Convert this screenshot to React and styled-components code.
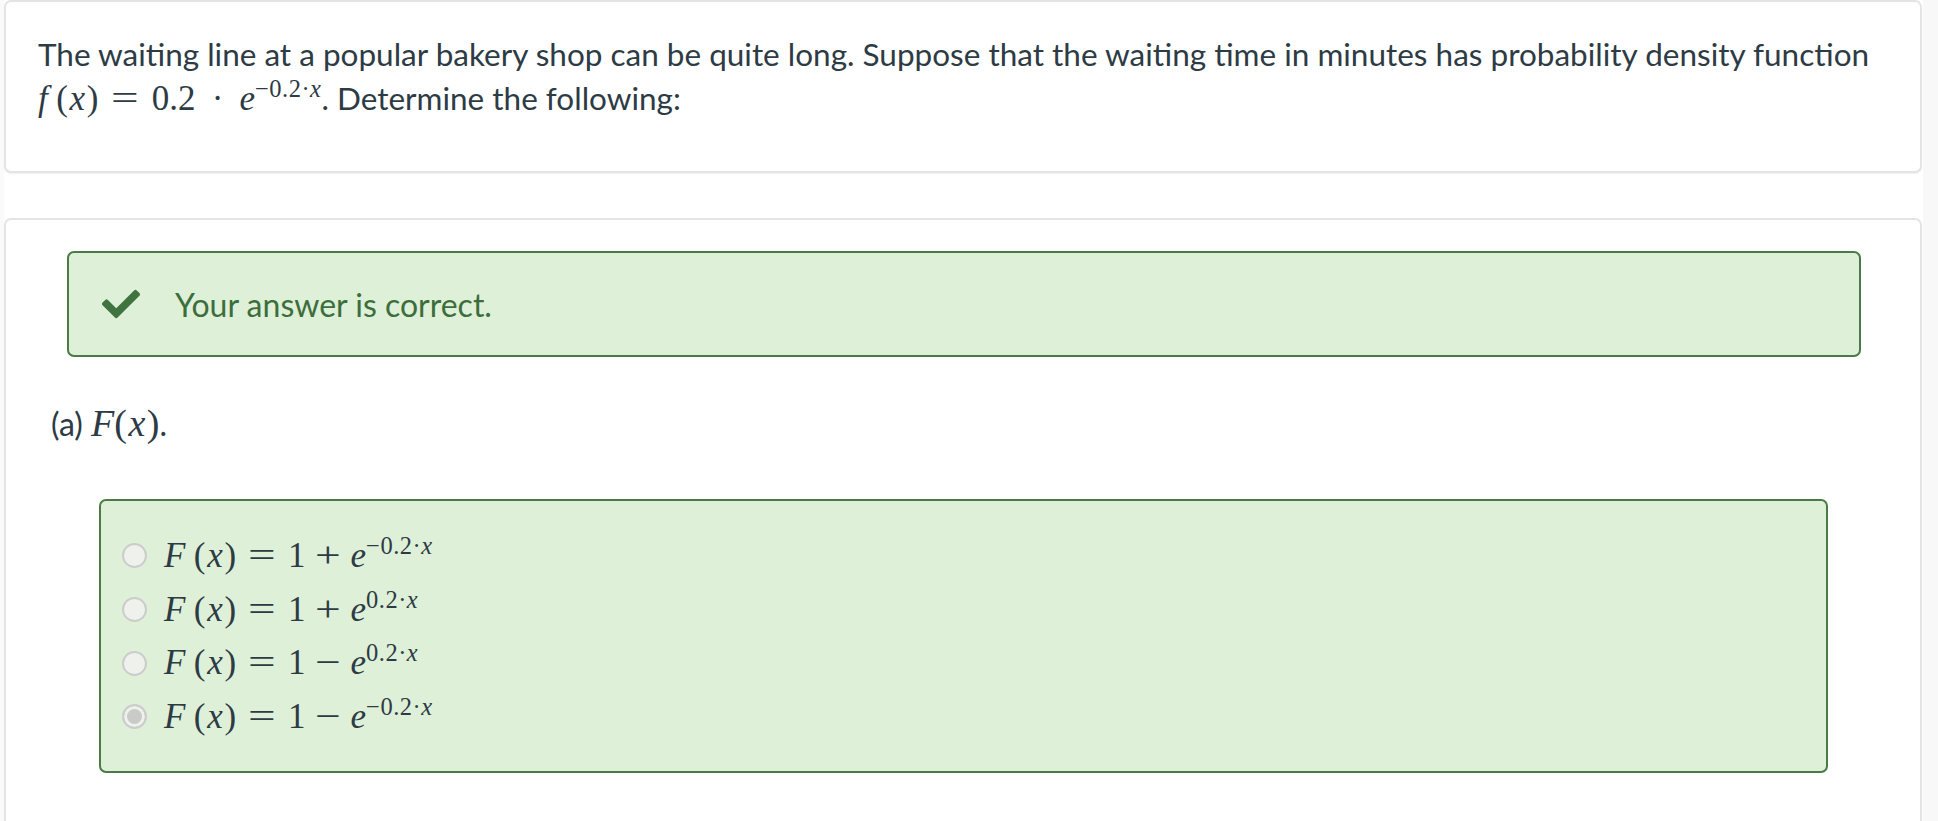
import React from 'react';
import styled, { createGlobalStyle } from 'styled-components';
import { FaCheck } from 'react-icons/fa';

const GlobalStyle = createGlobalStyle`
  body {
    margin: 0;
    font-family: Lato, "Open Sans", sans-serif;
    color: #2d3b45;
    background: #ffffff;
  }
`;

/* 페이지 전체: 본문 + 오른쪽 스크롤 영역 */
const PageBlock = styled.div`
  display: flex;
  min-height: 100vh;
`;

const Main = styled.div`
  flex: 1;
  padding: 0 1px 0 4px;
  background: linear-gradient(to right, #fafafa 0, #fafafa 4px, #ffffff 4px);
`;

const Gutter = styled.div`
  width: 15px;
  background: #f8f8f8;
`;

const Card = styled.div`
  background: #ffffff;
  border: 2px solid #e4e4e4;
  border-radius: 7px;
  box-shadow: 0 1px 1px rgba(0, 0, 0, 0.06);
  padding: ${p => p.$pad};
  & + & {
    margin-top: 45px;
  }
`;

const QuestionText = styled.p`
  margin: 0;
  font-size: 31.5px;
  line-height: 44px;
`;

/* 수식 (MathJax 느낌) */
const Math = styled.span`
  font-family: "Liberation Serif", "DejaVu Serif", serif;
  font-size: ${p => p.$size || '35px'};
  white-space: nowrap;
`;

const V = styled.i`
  font-style: italic;
  margin: 0 ${p => p.$m || '0'};
`;

const Gap = styled.span`
  display: inline-block;
  width: ${p => p.$w || '0.2em'};
`;

/* 연산자: TeX 기호처럼 가로로 조금 넓게 */
const Op = styled.span`
  display: inline-block;
  margin: 0 ${p => p.$m || '0.48em'};
  transform: scaleX(${p => p.$sx || 1});
`;

const Sup = styled.sup`
  font-size: 0.7em;
  vertical-align: 0.55em;
  line-height: 0;
  letter-spacing: 0.5px;
`;

const Alert = styled.div`
  display: flex;
  align-items: center;
  gap: 35px;
  height: 102px;
  margin: 0 14px 0 16px;
  padding-left: 33px;
  background: #dff0d8;
  border: 2px solid #4a7a46;
  border-radius: 7px;
  color: #3c6e3c;
  font-size: 32px;
`;

const CheckIcon = styled(FaCheck)`
  width: 38px;
  height: 38px;
  color: #3f7440;
`;

const PartLabel = styled.div`
  margin-top: 44px;
  font-size: 32px;
  line-height: 44px;
`;

const Options = styled.div`
  margin: 53px 47px 0 48px;
  padding: 28px 20px 27px 21px;
  background: #dff0d8;
  border: 2px solid #4a7a46;
  border-radius: 7px;
  display: flex;
  flex-direction: column;
`;

const OptionRow = styled.label`
  display: flex;
  align-items: center;
  gap: 17px;
  height: 53.7px;
`;

const Radio = styled.span`
  width: 21px;
  height: 21px;
  border-radius: 50%;
  border: 2px solid #cccccc;
  background: ${p => (p.$checked ? '#c9cbc8' : '#eef1ec')};
  box-shadow: ${p => (p.$checked ? 'inset 0 0 0 3px #eef1ec' : 'none')};
  flex-shrink: 0;
`;

const Fx = ({ f = 'f' }) => (
  <>
    <V>{f}</V>
    <Gap $w="0.24em" />(<V $m="0.05em">x</V>)
  </>
);

const Exp = ({ text }) => {
  const [num, v] = text.split('·');
  return (
    <Sup>
      {num}·<V>{v}</V>
    </Sup>
  );
};

const options = [
  { sign: '+', exp: '−0.2·x' },
  { sign: '+', exp: '0.2·x' },
  { sign: '−', exp: '0.2·x' },
  { sign: '−', exp: '−0.2·x', checked: true }
];

const App = () => {
  return (
    <PageBlock>
      <GlobalStyle />
      <Main>
        <Card $pad="30px 32px 50px 32px">
          <QuestionText>
            The waiting line at a popular bakery shop can be quite long. Suppose that the waiting time in minutes has
            probability density function
            <br />
            <Math>
              <Fx f="f" />
              <Op $sx={1.4}>=</Op>0.2<Op $m="0.46em">·</Op>
              <V>e</V>
              <Exp text="−0.2·x" />
            </Math>
            . Determine the following:
          </QuestionText>
        </Card>
        <Card $pad="31px 45px 60px 45px">
          <Alert>
            <CheckIcon />
            <span>Your answer is correct.</span>
          </Alert>
          <PartLabel>
            (a){' '}
            <Math $size="38px">
              <V>F</V>(<V $m="0.04em">x</V>)
            </Math>
            .
          </PartLabel>
          <Options>
            {options.map((o, i) => (
              <OptionRow key={i}>
                <Radio $checked={o.checked} />
                <Math>
                  <Fx f="F" />
                  <Op $sx={1.4} $m="0.46em">=</Op>1<Op $sx={1.3} $m="0.36em">{o.sign}</Op>
                  <V>e</V>
                  <Exp text={o.exp} />
                </Math>
              </OptionRow>
            ))}
          </Options>
        </Card>
      </Main>
      <Gutter />
    </PageBlock>
  );
};

export default App;
